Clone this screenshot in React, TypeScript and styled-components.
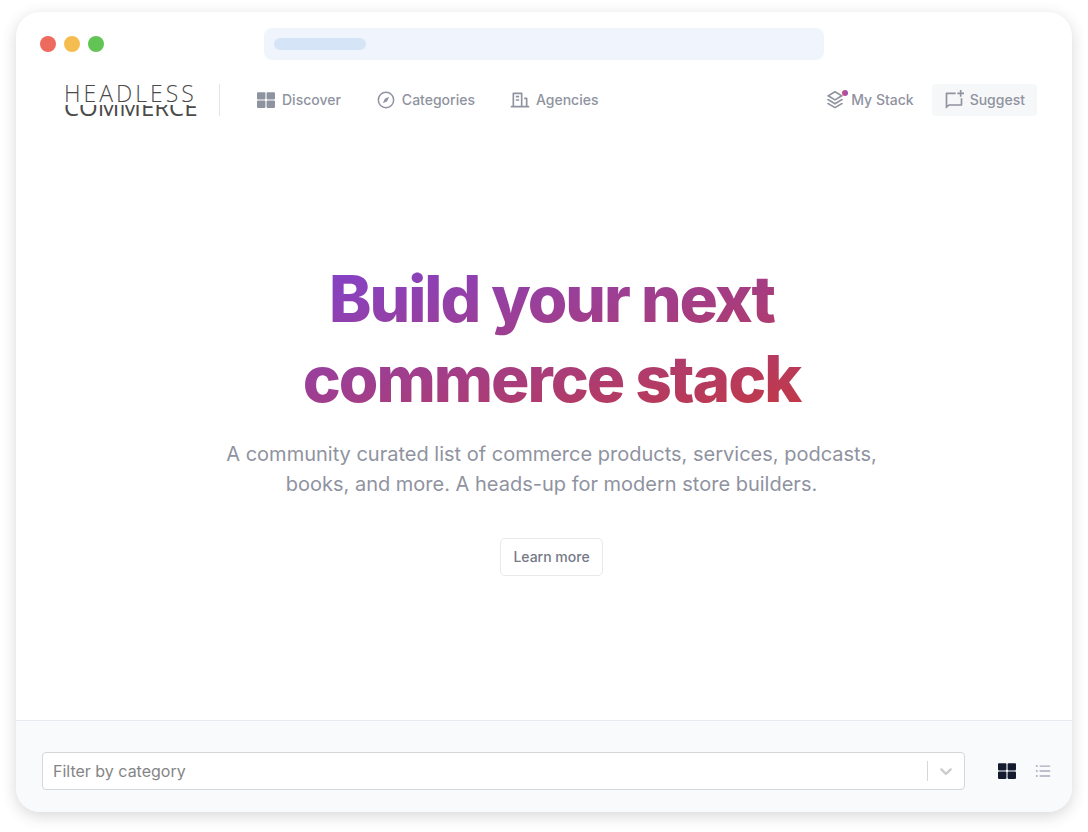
import React from "react";
import styled, { createGlobalStyle } from "styled-components";
import { RiBuildingLine, RiStackLine, RiChatNewLine } from "react-icons/ri";
import { FaThLarge } from "react-icons/fa";
import { AiOutlineUnorderedList } from "react-icons/ai";

const GlobalStyle = createGlobalStyle`
  *, *::before, *::after { box-sizing: border-box; }
  body { margin: 0; background: #fff; font-family: Inter, "Liberation Sans", sans-serif; }
  button, select { font: inherit; margin: 0; }
  a { color: inherit; text-decoration: none; }
`;

const Page = styled.div`
  min-height: 100vh;
  padding: 12px 16px 20px;
  display: flex;
`;

const BrowserWindow = styled.div`
  flex: 1;
  min-width: 0;
  display: flex;
  flex-direction: column;
  border-radius: 24px;
  overflow: hidden;
  background: #fff;
  box-shadow: 0 4px 16px rgba(0, 0, 0, 0.16);
`;

const TitleBar = styled.div`
  display: grid;
  grid-template-columns: 1fr minmax(0, 560px) 1fr;
  align-items: center;
  padding: 16px 24px;
`;

const Lights = styled.div`
  display: flex;
  gap: 8px;
`;

const Light = styled.span<{ $color: string }>`
  width: 16px;
  height: 16px;
  border-radius: 50%;
  background: ${(p) => p.$color};
`;

const AddressBar = styled.div`
  display: flex;
  align-items: center;
  height: 32px;
  padding: 0 10px;
  border-radius: 8px;
  background: #f0f5fd;
`;

const AddressText = styled.span`
  width: 92px;
  height: 12px;
  border-radius: 6px;
  background: #d6e4f7;
`;

const Header = styled.header`
  display: flex;
  align-items: center;
  justify-content: space-between;
  padding: 8px 35px 0 48px;
`;

const HeaderGroup = styled.div`
  display: flex;
  align-items: center;
`;

const Logo = styled.a`
  display: flex;
  flex-direction: column;
  width: 156px;
  height: 32px;
  border-right: 1px solid #e2e4e8;
  font-family: "Open Sans", sans-serif;
  color: #4a4a4a;
`;

const LogoTop = styled.span`
  flex: none;
  height: 21px;
  font-size: 23px;
  line-height: 18px;
  font-weight: 300;
  letter-spacing: 3px;
`;

const LogoBottom = styled.span`
  flex: none;
  display: flex;
  align-items: flex-end;
  height: 12px;
  overflow: hidden;
  font-size: 24px;
  line-height: 20px;
  font-weight: 400;
`;

const Nav = styled.nav`
  display: flex;
  align-items: center;
  gap: 35px;
  padding-left: 36px;
`;

const NavLink = styled.a`
  display: flex;
  align-items: center;
  gap: 6px;
  font-size: 14px;
  line-height: 20px;
  font-weight: 500;
  color: #8f939f;
`;

const IconSlot = styled.span`
  position: relative;
  display: flex;
  align-items: center;
  justify-content: center;
  width: 20px;
  height: 20px;
`;

const Dot = styled.span`
  position: absolute;
  top: 0;
  right: -3px;
  width: 6px;
  height: 6px;
  border-radius: 50%;
  background: linear-gradient(90deg, #d0526f, #9a4cc4);
`;

const SuggestButton = styled.button`
  display: flex;
  align-items: center;
  gap: 6px;
  height: 32px;
  margin-left: 18px;
  padding: 0 12px;
  border: 0;
  border-radius: 4px;
  background: #f6f7f9;
  font-size: 14px;
  line-height: 20px;
  font-weight: 500;
  color: #8f939f;
`;

const Hero = styled.main`
  flex: 1;
  display: flex;
  flex-direction: column;
  align-items: center;
  justify-content: center;
  padding: 0 0 2px 15px;
  text-align: center;
`;

const Title = styled.h1`
  margin: 0;
  max-width: 504px;
  font-size: 64px;
  line-height: 80px;
  font-weight: 800;
  letter-spacing: -2px;
  color: transparent;
  background: linear-gradient(to bottom right, #8043d0, #c53840);
  background-clip: text;
  -webkit-background-clip: text;
`;

const Lead = styled.p`
  margin: 20px 0 39px;
  max-width: 672px;
  font-size: 20px;
  line-height: 30px;
  color: #8f939f;
`;

const LearnMore = styled.button`
  height: 38px;
  padding: 0 12px;
  border: 1px solid #e8e9ec;
  border-radius: 5px;
  background: #fff;
  font-size: 14px;
  line-height: 20px;
  font-weight: 500;
  color: #757987;
`;

const FilterBar = styled.footer`
  display: flex;
  align-items: center;
  padding: 31px 20px 22px 26px;
  border-top: 1px solid #e7e8f0;
  background: #f9fafc;
`;

const SelectBox = styled.div`
  position: relative;
  flex: 1;
  display: flex;
`;

const Select = styled.select`
  width: 100%;
  height: 38px;
  padding: 0 48px 0 10px;
  appearance: none;
  border: 1px solid #d4d6d8;
  border-radius: 4px;
  background: #fff;
  font-size: 16px;
  color: #858585;
`;

const SelectIndicator = styled.span`
  position: absolute;
  top: 9px;
  right: 9px;
  display: flex;
  align-items: center;
  height: 20px;
  padding-left: 8px;
  border-left: 1px solid #d4d6d8;
  color: #ccc;
  pointer-events: none;
`;

const ViewButtons = styled.div`
  display: flex;
  gap: 18px;
  margin-left: 33px;
`;

const ViewButton = styled.button<{ $active?: boolean }>`
  display: flex;
  padding: 0;
  border: 0;
  background: none;
  color: ${(p) => (p.$active ? "#151b2e" : "#a9adbb")};
`;

function CompassIcon() {
  return (
    <svg width="20" height="20" viewBox="0 0 24 24" aria-hidden="true">
      <circle cx="12" cy="12" r="9.2" fill="none" stroke="currentColor" strokeWidth="1.8" />
      <path d="M15.8 8.2L13.4 13.4L8.2 15.8L10.6 10.6Z" fill="currentColor" />
    </svg>
  );
}

function ChevronIcon() {
  return (
    <svg width="20" height="20" viewBox="0 0 20 20" fill="currentColor" aria-hidden="true">
      <path d="M4.516 7.548c0.436-0.446 1.043-0.481 1.576 0l3.908 3.747 3.908-3.747c0.533-0.481 1.141-0.446 1.574 0 0.436 0.445 0.408 1.197 0 1.615-0.406 0.418-4.695 4.502-4.695 4.502-0.217 0.223-0.502 0.335-0.787 0.335s-0.57-0.112-0.789-0.335c0 0-4.287-4.084-4.695-4.502s-0.436-1.17 0-1.615z" />
    </svg>
  );
}

export default function App() {
  return (
    <>
      <GlobalStyle />
      <Page>
        <BrowserWindow>
          <TitleBar>
            <Lights>
              <Light $color="#ee6a5f" />
              <Light $color="#f5bd4f" />
              <Light $color="#61c454" />
            </Lights>
            <AddressBar>
              <AddressText />
            </AddressBar>
          </TitleBar>
          <Header>
            <HeaderGroup>
              <Logo href="#">
                <LogoTop>HEADLESS</LogoTop>
                <LogoBottom>COMMERCE</LogoBottom>
              </Logo>
              <Nav>
                <NavLink href="#">
                  <IconSlot><FaThLarge size={18} /></IconSlot>
                  Discover
                </NavLink>
                <NavLink href="#">
                  <IconSlot><CompassIcon /></IconSlot>
                  Categories
                </NavLink>
                <NavLink href="#">
                  <IconSlot><RiBuildingLine size={20} /></IconSlot>
                  Agencies
                </NavLink>
              </Nav>
            </HeaderGroup>
            <HeaderGroup>
              <NavLink href="#">
                <IconSlot><RiStackLine size={20} /><Dot /></IconSlot>
                My Stack
              </NavLink>
              <SuggestButton type="button">
                <IconSlot><RiChatNewLine size={20} /></IconSlot>
                Suggest
              </SuggestButton>
            </HeaderGroup>
          </Header>
          <Hero>
            <Title>Build your next commerce stack</Title>
            <Lead>
              A community curated list of commerce products, services, podcasts, books, and more. A
              heads-up for modern store builders.
            </Lead>
            <LearnMore type="button">Learn more</LearnMore>
          </Hero>
          <FilterBar>
            <SelectBox>
              <Select aria-label="Filter by category" defaultValue="">
                <option value="">Filter by category</option>
              </Select>
              <SelectIndicator><ChevronIcon /></SelectIndicator>
            </SelectBox>
            <ViewButtons>
              <ViewButton type="button" $active aria-label="Grid view"><FaThLarge size={18} /></ViewButton>
              <ViewButton type="button" aria-label="List view"><AiOutlineUnorderedList size={18} /></ViewButton>
            </ViewButtons>
          </FilterBar>
        </BrowserWindow>
      </Page>
    </>
  );
}
